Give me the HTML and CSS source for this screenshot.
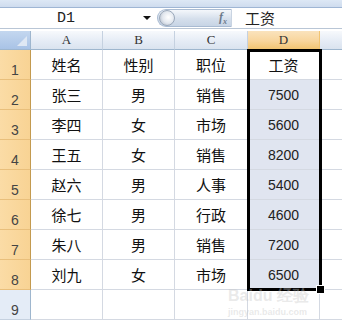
FILE: index.html
```html
<!DOCTYPE html>
<html>
<head>
  <meta charset="utf-8">
  <title>工资表</title>
  <link rel="stylesheet" href="styles.css">
</head>
<body>
  <div class="window">
    <div class="ribbon-edge"></div>
    <div class="formula-bar">
      <div class="name-box">D1</div>
      <div class="name-arrow"></div>
      <div class="fx-button">
        <span class="knob"></span>
        <span class="fx">f<sub>x</sub></span>
      </div>
      <div class="formula-text">工资</div>
    </div>

    <div class="sheet">
      <div class="grid">
        <div class="corner"><span class="corner-tri"></span></div>
        <div class="col-head">A</div>
        <div class="col-head">B</div>
        <div class="col-head">C</div>
        <div class="col-head active">D</div>
        <div class="col-head rest"></div>

        <div class="row-head active">1</div>
        <div class="cell">姓名</div><div class="cell">性别</div><div class="cell">职位</div><div class="cell">工资</div><div class="cell rest"></div>

        <div class="row-head active">2</div>
        <div class="cell">张三</div><div class="cell">男</div><div class="cell">销售</div><div class="cell num sel">7500</div><div class="cell rest"></div>

        <div class="row-head active">3</div>
        <div class="cell">李四</div><div class="cell">女</div><div class="cell">市场</div><div class="cell num sel">5600</div><div class="cell rest"></div>

        <div class="row-head active">4</div>
        <div class="cell">王五</div><div class="cell">女</div><div class="cell">销售</div><div class="cell num sel">8200</div><div class="cell rest"></div>

        <div class="row-head active">5</div>
        <div class="cell">赵六</div><div class="cell">男</div><div class="cell">人事</div><div class="cell num sel">5400</div><div class="cell rest"></div>

        <div class="row-head active">6</div>
        <div class="cell">徐七</div><div class="cell">男</div><div class="cell">行政</div><div class="cell num sel">4600</div><div class="cell rest"></div>

        <div class="row-head active">7</div>
        <div class="cell">朱八</div><div class="cell">男</div><div class="cell">销售</div><div class="cell num sel">7200</div><div class="cell rest"></div>

        <div class="row-head active">8</div>
        <div class="cell">刘九</div><div class="cell">女</div><div class="cell">市场</div><div class="cell num sel">6500</div><div class="cell rest"></div>

        <div class="row-head">9</div>
        <div class="cell"></div><div class="cell"></div><div class="cell"></div><div class="cell"></div><div class="cell rest"></div>
      </div>
      <!-- selection frame D1:D8 -->
      <div class="selection"><span class="fill-handle"></span></div>
      <div class="watermark">Baidu 经验<br><small>jingyan.baidu.com</small></div>
    </div>
  </div>
</body>
</html>
```

FILE: styles.css
```css
body {
  margin: 0;
  padding: 0;
  background: #fff;
  font-family: "Noto Sans CJK SC", sans-serif;
  overflow: hidden;
}

.window {
  width: 342px;
  height: 320px;
  overflow: hidden;
  background: #fff;
}

.ribbon-edge {
  height: 7px;
  background: linear-gradient(#dde8f5, #cfdcee);
  border-bottom: 1px solid #9fb6d4;
}

.formula-bar {
  display: flex;
  align-items: center;
  height: 20px;
  background: #fff;
  border-bottom: 1px solid #b9c6d6;
  margin-bottom: 2px;
}

.name-box {
  width: 132px;
  text-align: center;
  font-family: "Liberation Mono", monospace;
  font-size: 15px;
  color: #222;
}

.name-arrow {
  width: 0;
  height: 0;
  margin-left: 11px;
  border-left: 4px solid transparent;
  border-right: 4px solid transparent;
  border-top: 4px solid #111;
}

.fx-button {
  display: flex;
  align-items: center;
  justify-content: space-between;
  width: 75px;
  height: 18px;
  margin-left: 6px;
  box-sizing: border-box;
  border: 1px solid #a9bbd2;
  border-radius: 9px 0 0 9px;
  border-right-color: #c9d4e2;
  background: linear-gradient(#f4f7fb, #d5dfec 55%, #c7d4e5);
}

.knob {
  width: 14px;
  height: 14px;
  margin-left: 1px;
  border-radius: 50%;
  background: radial-gradient(circle at 60% 45%, #ffffff, #e3e8ef 50%, #a5afbd);
  border: 1px solid #9aa8ba;
}

.fx {
  margin-right: 4px;
  font-family: "Liberation Serif", serif;
  font-style: italic;
  font-weight: bold;
  font-size: 12px;
  color: #6d7a8b;
}

.fx sub {
  font-size: 8px;
}

.formula-text {
  margin-left: 13px;
  font-size: 15px;
  color: #222;
  line-height: 20px;
}

.sheet {
  position: relative;
}

.grid {
  display: grid;
  grid-template-columns: 31px 72px 72px 73px 72px 1fr;
  grid-template-rows: 19px repeat(9, 30px);
}

.corner {
  position: relative;
  background: linear-gradient(#c4d7ef, #a9c3e6);
  border-right: 1px solid #9eb6ce;
  border-bottom: 1px solid #9eb6ce;
}

.corner-tri {
  position: absolute;
  right: 3px;
  bottom: 3px;
  width: 0;
  height: 0;
  border-left: 10px solid transparent;
  border-bottom: 10px solid #dfe8f4;
}

.col-head {
  display: flex;
  align-items: center;
  justify-content: center;
  font-family: "Liberation Serif", serif;
  font-size: 13px;
  color: #333;
  background: linear-gradient(#f7f9fc, #e4ebf5 60%, #dae3ef);
  border-right: 1px solid #c5d1e0;
  border-bottom: 1px solid #9eb6ce;
}

.col-head.active {
  background: linear-gradient(#fae3bd, #f8d59d 55%, #f2c472);
  border-right-color: #f2c472;
  border-bottom-color: #c39a4f;
}

.col-head.rest {
  border-right: none;
}

.row-head {
  display: flex;
  align-items: flex-end;
  justify-content: center;
  padding-bottom: 1px;
  box-sizing: border-box;
  font-family: "Liberation Sans", sans-serif;
  font-size: 14px;
  color: #444;
  background: #e4ecf7;
  border-right: 1px solid #9eb6ce;
  border-bottom: 1px solid #c5d1e0;
}

.row-head.active {
  background: linear-gradient(90deg, #fbdca6, #f8d394);
  border-right-color: #c39a4f;
  border-bottom-color: #e9bf7b;
}

.cell {
  display: flex;
  align-items: center;
  justify-content: center;
  font-size: 15px;
  color: #111;
  border-right: 1px solid #d4d9e2;
  border-bottom: 1px solid #d4d9e2;
}

.cell.rest {
  border-right: none;
}

.cell.num {
  font-family: "Liberation Sans", sans-serif;
  font-size: 14px;
  color: #222;
}

.cell.sel {
  background: #e0e5f0;
}

.selection {
  position: absolute;
  left: 247px;
  top: 18px;
  width: 69px;
  height: 236px;
  border: 3px solid #000;
  pointer-events: none;
}

.fill-handle {
  position: absolute;
  right: -6px;
  bottom: -6px;
  width: 7px;
  height: 7px;
  background: #000;
  border: 1px solid #fff;
}

.watermark {
  position: absolute;
  left: 228px;
  top: 258px;
  font-family: "Liberation Sans", sans-serif;
  font-weight: bold;
  font-size: 16px;
  line-height: 14px;
  color: rgba(200, 200, 200, 0.4);
  pointer-events: none;
}

.watermark small {
  font-size: 9px;
}
```
